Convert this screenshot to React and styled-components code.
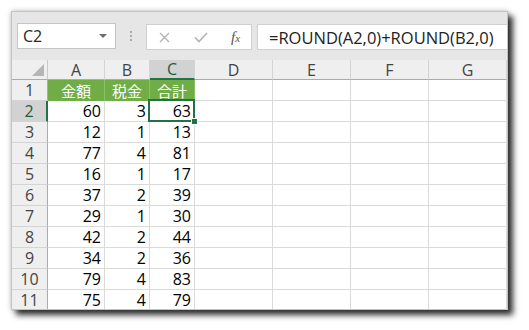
import React from "react";
import styled, { createGlobalStyle } from "styled-components";

const GlobalStyle = createGlobalStyle`
  html, body {
    margin: 0;
    padding: 0;
    background: #ffffff;
  }
  body {
    font-family: "Open Sans", "Liberation Sans", "Noto Sans CJK JP", sans-serif;
  }
`;

const columns = ["A", "B", "C", "D", "E", "F", "G"];
const widths = [36, 57, 45, 45, 78, 78, 78, 78];
const titles = ["金額", "税金", "合計"];
const blanks = [0, 1, 2, 3];
const rows = [
  [60, 3, 63],
  [12, 1, 13],
  [77, 4, 81],
  [16, 1, 17],
  [37, 2, 39],
  [29, 1, 30],
  [42, 2, 44],
  [34, 2, 36],
  [79, 4, 83],
  [75, 4, 79],
];

function App() {
  return (
    <Page>
      <GlobalStyle />
      <Window>
        <Toolbar>
          <NameBox>
            <span>C2</span>
            <Caret />
          </NameBox>
          <Grip>
            <i />
            <i />
            <i />
          </Grip>
          <FxButtons>
            <FxIcon>
              <svg width="11" height="11" viewBox="0 0 11 11">
                <path d="M1 1 L10 10 M10 1 L1 10" stroke="#b3b3b3" strokeWidth="1.4" fill="none" />
              </svg>
            </FxIcon>
            <FxIcon>
              <svg width="14" height="11" viewBox="0 0 14 11">
                <path d="M1 5.5 L5 9.5 L13 1" stroke="#b3b3b3" strokeWidth="1.6" fill="none" />
              </svg>
            </FxIcon>
            <FxLabel>
              f<small>x</small>
            </FxLabel>
          </FxButtons>
          <Formula>=ROUND(A2,0)+ROUND(B2,0)</Formula>
        </Toolbar>
        <Sheet $cols={widths}>
          <Corner>
            <Triangle />
          </Corner>
          {columns.map((c) => (
            <ColHead key={c} $active={c === "C"}>
              {c}
            </ColHead>
          ))}

          <RowHead>1</RowHead>
          {titles.map((t) => (
            <TitleCell key={t}>{t}</TitleCell>
          ))}
          {blanks.map((k) => (
            <Cell key={k} />
          ))}

          {rows.map((r, i) => (
            <React.Fragment key={i}>
              <RowHead $active={i === 0}>{i + 2}</RowHead>
              {r.map((v, j) => (
                <Cell key={j} $selected={i === 0 && j === 2}>
                  {v}
                  {i === 0 && j === 2 && <FillHandle />}
                </Cell>
              ))}
              {blanks.map((k) => (
                <Cell key={"e" + k} />
              ))}
            </React.Fragment>
          ))}
        </Sheet>
      </Window>
    </Page>
  );
}

export default App;

const Page = styled.div`
  width: 529px;
  height: 330px;
  padding: 11px 0 0 11px;
  box-sizing: border-box;
`;

const Window = styled.div`
  width: 497px;
  height: 299px;
  overflow: hidden;
  border: 1px solid #c4c4c4;
  box-sizing: border-box;
  background: #ffffff;
  box-shadow: 0 0 5px rgba(0, 0, 0, 0.25), 5px 5px 6px rgba(0, 0, 0, 0.8);
`;

const Toolbar = styled.div`
  height: 48px;
  background: #e6e6e6;
  display: flex;
  align-items: flex-start;
  padding: 11px 0 0 5px;
  box-sizing: border-box;
`;

const NameBox = styled.div`
  width: 99px;
  height: 26px;
  background: #ffffff;
  border: 1px solid #c6c6c6;
  box-sizing: border-box;
  display: flex;
  align-items: center;
  justify-content: space-between;
  padding: 0 8px 0 5px;
  font-size: 16px;
  color: #262626;
`;

const Caret = styled.span`
  width: 0;
  height: 0;
  border-left: 4px solid transparent;
  border-right: 4px solid transparent;
  border-top: 4px solid #6d6d6d;
`;

const Grip = styled.div`
  width: 30px;
  height: 26px;
  display: flex;
  flex-direction: column;
  align-items: center;
  justify-content: center;
  gap: 2px;

  i {
    width: 2px;
    height: 2px;
    background: #a8a8a8;
  }
`;

const FxButtons = styled.div`
  width: 106px;
  height: 26px;
  margin-top: 1px;
  background: #ffffff;
  border: 1px solid #d0d0d0;
  box-sizing: border-box;
  display: flex;
  align-items: center;
  padding: 0 6px 0 12px;
`;

const FxIcon = styled.span`
  width: 35px;
  display: flex;
  align-items: center;
  justify-content: flex-start;
`;

const FxLabel = styled.span`
  font-family: "Liberation Serif", "DejaVu Serif", serif;
  font-style: italic;
  font-size: 15px;
  color: #555555;
  margin-left: 2px;

  small {
    font-size: 11px;
  }
`;

const Formula = styled.div`
  flex: 1;
  height: 26px;
  margin-top: 1px;
  margin-left: 5px;
  background: #ffffff;
  border: 1px solid #d0d0d0;
  border-right: none;
  box-sizing: border-box;
  display: flex;
  align-items: center;
  padding-left: 11px;
  font-size: 16.5px;
  color: #222222;
  white-space: nowrap;
`;

const Sheet = styled.div`
  display: grid;
  grid-template-columns: ${(p) => p.$cols.map((w) => w + "px").join(" ")};
  grid-template-rows: 20px repeat(11, 21px);
`;

const Corner = styled.div`
  background: #efefef;
  border-right: 1px solid #c9c9c9;
  border-bottom: 1px solid #ababab;
  box-sizing: border-box;
  display: flex;
  align-items: flex-end;
  justify-content: flex-end;
  padding: 0 3px 3px 0;
`;

const Triangle = styled.span`
  width: 0;
  height: 0;
  border-left: 12px solid transparent;
  border-bottom: 12px solid #b5b5b5;
`;

const ColHead = styled.div`
  background: ${(p) => (p.$active ? "#d2d2d2" : "#efefef")};
  color: ${(p) => (p.$active ? "#1e5c3a" : "#444444")};
  border-right: 1px solid #d4d4d4;
  border-bottom: ${(p) => (p.$active ? "2px solid #217346" : "1px solid #ababab")};
  box-sizing: border-box;
  display: flex;
  align-items: center;
  justify-content: center;
  font-size: 16px;
`;

const RowHead = styled.div`
  background: ${(p) => (p.$active ? "#d2d2d2" : "#efefef")};
  color: ${(p) => (p.$active ? "#1e5c3a" : "#444444")};
  border-right: ${(p) => (p.$active ? "2px solid #217346" : "1px solid #ababab")};
  border-bottom: 1px solid #d4d4d4;
  box-sizing: border-box;
  display: flex;
  align-items: center;
  justify-content: center;
  font-size: 16px;
`;

const TitleCell = styled.div`
  background: #70ad47;
  color: #ffffff;
  border-right: 1px solid #8cbf6a;
  box-sizing: border-box;
  display: flex;
  align-items: center;
  justify-content: center;
  font-family: "Noto Sans CJK JP", sans-serif;
  font-size: 15px;
`;

const Cell = styled.div`
  position: relative;
  border-right: 1px solid #dadada;
  border-bottom: 1px solid #dadada;
  box-sizing: border-box;
  display: flex;
  align-items: center;
  justify-content: flex-end;
  padding-right: 3px;
  font-size: 16px;
  color: #000000;

  ${(p) =>
    p.$selected &&
    `
    &::after {
      content: "";
      position: absolute;
      left: -2px;
      top: -2px;
      right: -1px;
      bottom: -1px;
      border: 2px solid #217346;
    }
  `}
`;

const FillHandle = styled.span`
  position: absolute;
  right: -4px;
  bottom: -4px;
  width: 5px;
  height: 5px;
  background: #217346;
  border: 1px solid #ffffff;
  z-index: 2;
`;
